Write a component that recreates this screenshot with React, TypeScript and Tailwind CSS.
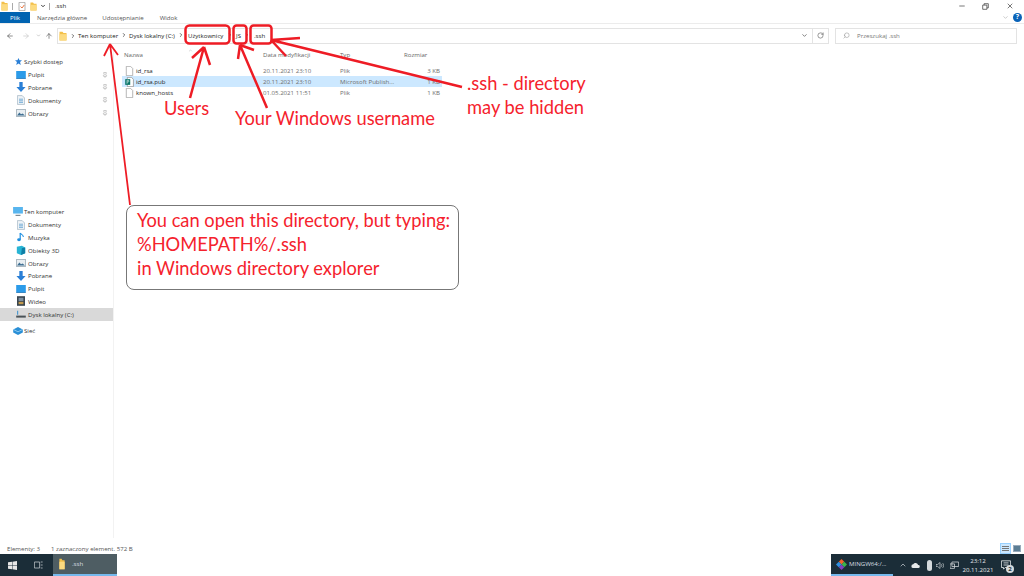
import { ChevronUp, ArrowLeft, ArrowRight, ArrowUp, ChevronDown, ChevronRight, RotateCw, Search, Pin, X, Minus } from "lucide-react";
import type { ReactNode } from "react";

const UI = "font-['Open_Sans','Liberation_Sans',sans-serif]";
const NOTE = "font-['Lato','Liberation_Sans',sans-serif] text-[#f5222d]";

const Folder = ({ className = "w-3 h-3" }: { className?: string }) => (
  <svg viewBox="0 0 16 16" preserveAspectRatio="none" className={className}>
    <path d="M1 1h6l2 2h6v12H1z" fill="#f3c04a" />
    <path d="M1 5h14v10H1z" fill="#fcdb80" />
  </svg>
);

const PlainFile = () => (
  <svg viewBox="0 0 12 14" className="w-[9px] h-[10px] shrink-0">
    <path d="M1.500.5h6l3 3v10h-9z" fill="#fff" stroke="#9a9a9a" />
  </svg>
);

const PubFile = () => (
  <svg viewBox="0 0 12 14" className="w-[9px] h-[10px] shrink-0">
    <path d="M3 .5h6l2.500 3v10H3z" fill="#fff" stroke="#8a8a8a" />
    <rect x="0" y="3" width="7" height="8" fill="#077568" />
    <path d="M2.500 9.500v-5h1.500a1 1 0 0 1 0 2.500H2.500" fill="none" stroke="#fff" strokeWidth=".8" />
  </svg>
);

const DesktopIcon = () => (
  <svg viewBox="0 0 12 10" className="w-[10px] h-[8px]">
    <rect width="12" height="9" fill="#2b9be9" />
    <rect y="9" width="12" height="1" fill="#1170b8" />
  </svg>
);
const DownIcon = () => (
  <svg viewBox="0 0 12 12" className="w-[10px] h-[10px]">
    <path d="M4 0h4v6h3.500L6 12 .5 6H4z" fill="#2a7fd6" />
  </svg>
);
const DocIcon = () => (
  <svg viewBox="0 0 10 12" className="w-[8px] h-[10px]">
    <path d="M.5.5h6l3 3v8h-9z" fill="#eef3f7" stroke="#a9bac7" />
    <path d="M2.500 5h5M2.500 7h5M2.500 9h5" stroke="#5f9fd0" />
  </svg>
);
const PicturesIcon = () => (
  <svg viewBox="0 0 12 10" className="w-[10px] h-[8px]">
    <rect x=".5" y=".5" width="11" height="9" fill="#e8eef2" stroke="#9aaab5" />
    <path d="M1 8l3-3.500 2 2 2-1 3 2.500z" fill="#3f6f92" />
  </svg>
);
const NoteIcon = () => (
  <svg viewBox="0 0 10 12" className="w-[8px] h-[10px]">
    <path d="M4 1v8" stroke="#1f8fe0" strokeWidth="1.500" />
    <path d="M4 1c1 2 4 2 4 5" fill="none" stroke="#1f8fe0" strokeWidth="1.300" />
    <ellipse cx="2.500" cy="9.500" rx="2.300" ry="1.800" fill="#1f8fe0" />
  </svg>
);
const CubeIcon = () => (
  <svg viewBox="0 0 12 12" className="w-[10px] h-[10px]">
    <path d="M1 2l6-1 4 2v7l-5 2-5-2z" fill="#28b4d4" />
    <path d="M7 4l4-1v7l-5 2z" fill="#0f7fa6" />
  </svg>
);
const VideoIcon = () => (
  <svg viewBox="0 0 10 12" className="w-[8px] h-[10px]">
    <rect width="10" height="12" fill="#39454f" />
    <rect x="2" y="2" width="6" height="4" fill="#7d8fa0" />
    <rect x="2" y="7" width="6" height="3" fill="#c39a4c" />
  </svg>
);
const DriveIcon = () => (
  <svg viewBox="0 0 12 10" className="w-[10px] h-[8px]">
    <path d="M1 1h1.500v5H1z" fill="#4f9bd0" />
    <rect y="7" width="12" height="2.500" fill="#4a5257" />
  </svg>
);

const QUICK: { label: string; icon: ReactNode }[] = [
  { label: "Pulpit", icon: <DesktopIcon /> },
  { label: "Pobrane", icon: <DownIcon /> },
  { label: "Dokumenty", icon: <DocIcon /> },
  { label: "Obrazy", icon: <PicturesIcon /> },
];

const PC: { label: string; icon: ReactNode; selected?: boolean }[] = [
  { label: "Dokumenty", icon: <DocIcon /> },
  { label: "Muzyka", icon: <NoteIcon /> },
  { label: "Obiekty 3D", icon: <CubeIcon /> },
  { label: "Obrazy", icon: <PicturesIcon /> },
  { label: "Pobrane", icon: <DownIcon /> },
  { label: "Pulpit", icon: <DesktopIcon /> },
  { label: "Wideo", icon: <VideoIcon /> },
  { label: "Dysk lokalny (C:)", icon: <DriveIcon />, selected: true },
];

const FILES = [
  { name: "id_rsa", date: "20.11.2021 23:10", type: "Plik", size: "3 KB" },
  { name: "id_rsa.pub", date: "20.11.2021 23:10", type: "Microsoft Publish...", size: "1 KB", selected: true },
  { name: "known_hosts", date: "01.05.2021 11:51", type: "Plik", size: "1 KB" },
];

function NavRow({ label, icon, pinned, selected }: { label: string; icon: ReactNode; pinned?: boolean; selected?: boolean }) {
  return (
    <div className={`h-[12.8px] flex items-center pl-[16px] pr-[4px] gap-[2px] ${selected ? "bg-[#d9d9d9]" : ""}`}>
      <span className="w-[10px] flex justify-center">{icon}</span>
      <span className="flex-1 whitespace-nowrap">{label}</span>
      {pinned && <Pin className="w-[6px] h-[6px] text-[#9a9a9a] mr-[1px]" />}
    </div>
  );
}

function Crumb({ label, className }: { label: string; className: string }) {
  return (
    <div className={`flex items-center shrink-0 ${className}`}>
      <span className="whitespace-nowrap">{label}</span>
      <span className="flex-1 flex justify-center">
        <ChevronRight className="w-[6px] h-[6px] text-[#444]" strokeWidth={3} />
      </span>
    </div>
  );
}

export default function App() {
  return (
    <div className={`relative w-[1024px] h-[576px] overflow-hidden bg-white text-[6.1px] text-[#333] flex flex-col ${UI}`}>
      {/* Title bar */}
      <div className="h-[12px] flex items-center pl-[1px]">
        <Folder className="w-[7px] h-[10px]" />
        <div className="w-px h-[7px] bg-[#aaa] ml-[4px] mr-[5px]" />
        <svg viewBox="0 0 10 12" className="w-[8px] h-[9px]">
          <path d="M1 .5h8v11H1z" fill="#fff" stroke="#999" />
          <path d="M3 6l2 2 3-4" fill="none" stroke="#e8662a" strokeWidth="1.200" />
        </svg>
        <Folder className="w-[7px] h-[9px] ml-[4px]" />
        <ChevronDown className="w-[6px] h-[6px] ml-[3px] text-black" strokeWidth={3} />
        <div className="w-px h-[7px] bg-[#aaa] ml-[3px] mr-[5px]" />
        <span className="text-[#222]">.ssh</span>
        <div className="flex-1" />
        <Minus className="w-[8px] h-[8px] text-[#333] mr-[16px]" />
        <svg viewBox="0 0 10 10" className="w-[7px] h-[7px] mr-[17px]">
          <path d="M1 3h6v6H1zM3 3V1h6v6H7" fill="none" stroke="#333" strokeWidth="1" />
        </svg>
        <X className="w-[8px] h-[8px] text-[#333] mr-[10px]" />
      </div>

      {/* Ribbon tabs */}
      <div className="h-[12px] flex items-center border-b border-[#ececec] text-[#555]">
        <div className="w-[30px] h-full bg-[#0063b1] text-white flex items-center justify-center">Plik</div>
        <span className="ml-[7px]">Narzędzia główne</span>
        <span className="ml-[15px]">Udostępnianie</span>
        <span className="ml-[16px]">Widok</span>
        <div className="flex-1" />
        <ChevronDown className="w-[7px] h-[7px] text-[#aaa] mr-[4px]" />
        <div className="w-[9px] h-[9px] rounded-full bg-[#0a63b8] text-white font-bold flex items-center justify-center mr-[2px] text-[7px]">?</div>
      </div>

      {/* Address toolbar */}
      <div className="h-[23px] flex items-center">
        <ArrowLeft className="w-[8px] h-[8px] ml-[6px] text-[#555]" />
        <ArrowRight className="w-[8px] h-[8px] ml-[8px] text-[#c4c4c4]" />
        <ChevronDown className="w-[5px] h-[5px] ml-[6px] text-[#888]" />
        <ArrowUp className="w-[8px] h-[8px] ml-[4px] text-[#555]" />
        <div className="ml-[4px] w-[772px] h-[16px] border border-[#e3e3e3] flex items-center text-[#222]">
          <Folder className="w-[8px] h-[10px] ml-[1px]" />
          <span className="w-[11px] flex justify-center">
            <ChevronRight className="w-[6px] h-[6px] text-[#444]" strokeWidth={3} />
          </span>
          <Crumb label="Ten komputer" className="w-[51px]" />
          <Crumb label="Dysk lokalny (C:)" className="w-[59px]" />
          <Crumb label="Użytkownicy" className="w-[48px]" />
          <Crumb label="JS" className="w-[18px]" />
          <span className="whitespace-nowrap">.ssh</span>
          <div className="flex-1" />
          <ChevronDown className="w-[7px] h-[7px] text-[#555] mr-[4px]" strokeWidth={2.5} />
          <div className="w-[16px] h-full border-l border-[#e3e3e3] flex items-center justify-center">
            <RotateCw className="w-[7px] h-[7px] text-[#555]" />
          </div>
        </div>
        <div className="ml-[6px] w-[182px] h-[16px] border border-[#e3e3e3] flex items-center text-[#777]">
          <Search className="w-[7px] h-[7px] ml-[7px] mr-[7px] text-[#999] -scale-x-100" />
          Przeszukaj .ssh
        </div>
      </div>

      {/* Main area */}
      <div className="flex-1 flex min-h-0">
        <aside className="w-[114px] pt-[8.5px] border-r border-[#f2f2f2]">
          <div className="h-[12.8px] flex items-center pl-[15px] gap-[2px]">
            <svg viewBox="0 0 12 12" className="w-[7px] h-[7px]">
              <path d="M6 0l1.800 4H12L8.700 7l1.100 5L6 9.300 2.200 12l1.100-5L0 4h4.200z" fill="#2a7fd6" />
            </svg>
            <span>Szybki dostęp</span>
          </div>
          {QUICK.map((item) => (
            <NavRow key={item.label} label={item.label} icon={item.icon} pinned />
          ))}
          <div className="h-[86px]" />
          <div className="h-[12.8px] flex items-center pl-[13px] gap-[1px]">
            <svg viewBox="0 0 12 11" className="w-[10px] h-[9px]">
              <rect width="12" height="8" fill="#58b5ee" />
              <path d="M3 9.500h6V11H3z" fill="#7b8a94" />
            </svg>
            <span>Ten komputer</span>
          </div>
          {PC.map((item) => (
            <NavRow key={item.label} label={item.label} icon={item.icon} selected={item.selected} />
          ))}
          <div className="h-[4px]" />
          <div className="h-[12.8px] flex items-center pl-[13px] gap-[1px]">
            <svg viewBox="0 0 12 10" className="w-[10px] h-[8px]">
              <path d="M6 0l6 3v4l-6 3-6-3V3z" fill="#2a8fd6" />
              <path d="M0 3l6 3 6-3" fill="none" stroke="#9fd4f5" />
            </svg>
            <span>Sieć</span>
          </div>
        </aside>

        <main className="flex-1 relative pl-[8px] pt-[1px]">
          <div className="w-[320px] h-[14px] flex items-center text-[#666] pl-[2px]">
            <span className="w-[139px]">Nazwa</span>
            <span className="w-[77px]">Data modyfikacji</span>
            <span className="w-[64px]">Typ</span>
            <span>Rozmiar</span>
          </div>
          <ChevronUp className="absolute left-[73px] top-[1px] w-[7px] h-[5px] text-[#aaa]" />
          <div className="mt-[3px]">
            {FILES.map((file) => (
              <div
                key={file.name}
                className={`w-[320px] h-[11px] flex items-center pl-[3px] pr-[2px] ${file.selected ? "bg-[#cce8ff]" : ""}`}
              >
                <div className="w-[138px] flex items-center gap-[2px] text-[#222]">
                  {file.selected ? <PubFile /> : <PlainFile />}
                  {file.name}
                </div>
                <span className="w-[77px] text-[#6d6d6d]">{file.date}</span>
                <span className="w-[62px] text-[#6d6d6d] whitespace-nowrap">{file.type}</span>
                <span className="flex-1 text-right text-[#6d6d6d]">{file.size}</span>
              </div>
            ))}
          </div>
        </main>
      </div>

      {/* Status bar */}
      <div className="h-[16px] pt-[5px] flex items-center text-[#555] pl-[7px]">
        <span>Elementy: 3</span>
        <span className="ml-[11px]">1 zaznaczony element. 572 B</span>
        <div className="flex-1" />
        <div className="w-[11px] h-[11px] bg-[#cce8ff] border border-[#99d1ff] flex flex-col justify-center gap-[1px] px-[1px] mr-[2px]">
          <div className="h-px bg-[#777]" />
          <div className="h-px bg-[#777]" />
          <div className="h-px bg-[#777]" />
        </div>
        <div className="w-[8px] h-[7px] bg-[#5b7d94] border border-[#9ab] mr-[3px]" />
      </div>

      {/* Taskbar, the middle is blanked out in the picture */}
      <div className="h-[22px] flex text-[#d8dee2]">
        <div className="w-[53px] bg-[#1b2d38] flex items-center">
          <svg viewBox="0 0 10 10" className="w-[9px] h-[9px] ml-[8px]">
            <path d="M0 1.500l4.500-.7v4H0zM5 .7l5-.7v4.800H5zM0 5.300h4.500v4L0 8.600zM5 5.300h5V10l-5-.7z" fill="#e6e6e6" />
          </svg>
          <svg viewBox="0 0 12 10" className="w-[9px] h-[8px] ml-[17px]">
            <path d="M.5 1h7v8h-7zM9 1h2.500M9 5h2.500M9 9h2.500" fill="none" stroke="#c8ced2" />
          </svg>
        </div>
        <div className="w-[64px] bg-[#4e5d63] border-b-2 border-[#76b9ed] flex items-center pl-[6px] gap-[7px]">
          <Folder className="w-[6px] h-[12px]" />
          <span>.ssh</span>
        </div>
        <div className="flex-1 bg-white" />
        <div className="w-[193px] bg-[#1b2d38] flex items-center">
          <div className="w-[62px] h-full border-b-2 border-[#76b9ed] flex items-center pl-[5px] gap-[2px] whitespace-nowrap">
            <svg viewBox="0 0 12 12" className="w-[11px] h-[11px] shrink-0">
              <path d="M6 0l3 3-3 3-3-3z" fill="#f0642a" />
              <path d="M9 3l3 3-3 3-3-3z" fill="#39b54a" />
              <path d="M6 6l3 3-3 3-3-3z" fill="#7f3fbf" />
              <path d="M3 3l3 3-3 3-3-3z" fill="#2f8fe0" />
            </svg>
            MINGW64:/...
          </div>
          <ChevronUp className="w-[8px] h-[8px] ml-[6px]" />
          <svg viewBox="0 0 12 8" className="w-[9px] h-[6px] ml-[4px]">
            <path d="M3 8a2.500 2.500 0 0 1 0-5 3.500 3.500 0 0 1 6.500 1A2 2 0 0 1 10 8z" fill="#e4e8ea" />
          </svg>
          <div className="w-[5px] h-[11px] rounded-full bg-[#d5dadd] ml-[7px]" />
          <svg viewBox="0 0 12 10" className="w-[8px] h-[7px] ml-[4px]">
            <path d="M0 3.500h2.500L6 .5v9L2.500 6.500H0zM8 3c1 1 1 3 0 4M10 1.500c2 2 2 5 0 7" fill="none" stroke="#d5dadd" />
          </svg>
          <svg viewBox="0 0 12 10" className="w-[9px] h-[8px] ml-[6px]">
            <path d="M2.500 1h9v6h-9zM0 3.500h6v6H0z" fill="#1b2d38" stroke="#d5dadd" />
          </svg>
          <div className="w-[36px] ml-[1px] text-center leading-[9.5px] text-[#e6eaec]">
            <div>23:12</div>
            <div>20.11.2021</div>
          </div>
          <div className="relative ml-[5px]">
            <svg viewBox="0 0 12 11" className="w-[10px] h-[10px]">
              <path d="M.5.5h11v8H5L3 10.500V8.500H.5z" fill="none" stroke="#e6eaec" />
              <path d="M3 3h6M3 5.500h6" stroke="#e6eaec" />
            </svg>
            <div className="absolute -right-[3px] -bottom-[3px] w-[8px] h-[8px] rounded-full bg-[#d5dadd] text-[#1b2d38] text-[6px] font-bold flex items-center justify-center">2</div>
          </div>
        </div>
      </div>

      {/* Red annotations drawn on top of the screenshot */}
      <svg className="absolute inset-0 pointer-events-none" width="1024" height="576" fill="none" stroke="#ee1c25">
        <rect x="185.500" y="25.500" width="44" height="18" rx="4" strokeWidth="2.500" />
        <rect x="233.500" y="25.500" width="13" height="18" rx="3" strokeWidth="2.500" />
        <rect x="250.500" y="25.500" width="21" height="18" rx="3" strokeWidth="2.500" />
        <path d="M130 205L110 44M110 44L104 56M110 44L118 55" strokeWidth="1.800" />
        <path d="M190 98L204 47M204 47L210 65M204 47L192 58" strokeWidth="2.500" />
        <path d="M267 108L240 45M240 45L238 59M240 45L254 50" strokeWidth="2.500" />
        <path d="M462 87L271 40M271 40L300 38M271 40L286 56" strokeWidth="2.500" />
      </svg>
      <span className={`absolute left-[164px] top-[95px] text-[18.3px] leading-[26px] ${NOTE}`}>Users</span>
      <span className={`absolute left-[235px] top-[105px] text-[18.3px] leading-[26px] whitespace-nowrap ${NOTE}`}>Your Windows username</span>
      <div className={`absolute left-[467px] top-[71px] text-[18.3px] leading-[24px] whitespace-nowrap ${NOTE}`}>
        <div>.ssh - directory</div>
        <div>may be hidden</div>
      </div>
      <div className={`absolute left-[126px] top-[205px] w-[333px] h-[85px] bg-white border border-[#777] rounded-[8px] pl-[10px] pt-[2px] text-[18.3px] leading-[24px] whitespace-nowrap ${NOTE}`}>
        <div>You can open this directory, but typing:</div>
        <div>%HOMEPATH%/.ssh</div>
        <div>in Windows directory explorer</div>
      </div>
    </div>
  );
}
